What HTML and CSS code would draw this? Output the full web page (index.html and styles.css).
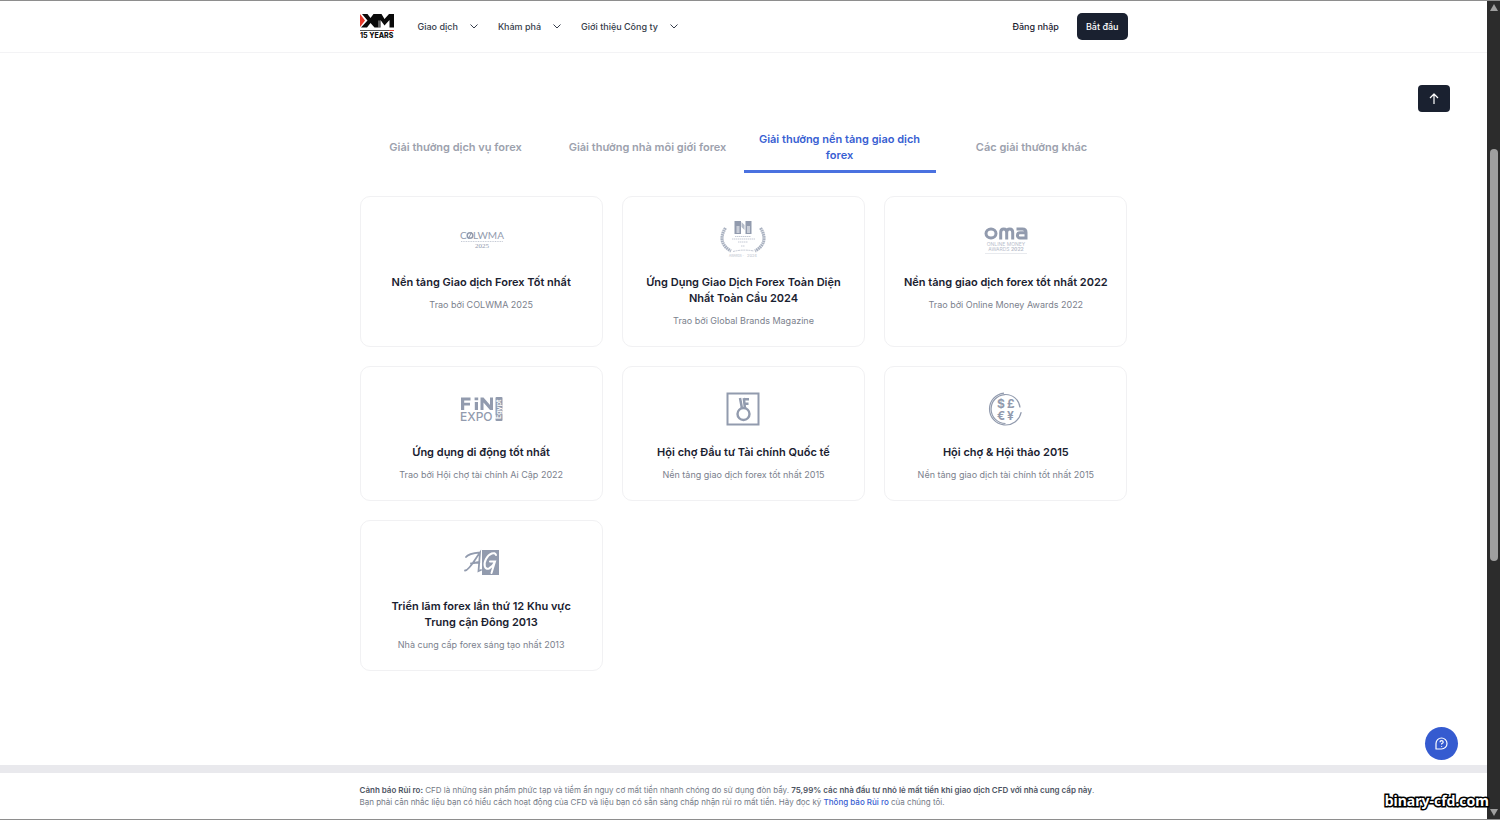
FILE: index.html
```html
<!DOCTYPE html>
<html lang="vi">
<head>
<meta charset="utf-8">
<title>XM - Giải thưởng</title>
<link rel="stylesheet" href="styles.css">
</head>
<body>
<div class="page">
  <header class="header">
    <div class="container header-row">
      <a class="logo" href="#" aria-label="XM 15 Years">
        <svg width="36" height="26" viewBox="1 1 36 26">
          <path d="M1 1L6 7.500L1 14Z" fill="#e8392b"/>
          <path d="M3 1H8.500L11.500 5L14.500 1H22.500L25.500 6L30 1H35V14.500H30.500V7L25.500 12.500L21.500 7V14.500H15.500L11.500 10L8 14.500H2L8.500 7.500Z" fill="#0a0a0a"/>
          <path d="M20 7.500V14.500" fill="none" stroke="#fff" stroke-width=".7"/>
          <path d="M1 17.500H30" stroke="#555" stroke-width="1"/>
          <path d="M30 17.500H35" stroke="#e8392b" stroke-width="1"/>
          <text x="1" y="25" class="logo-years">15 YEARS</text>
        </svg>
      </a>
      <nav class="nav">
        <button class="nav-item">Giao dịch <svg class="chevron" viewBox="0 0 8 5"><path d="M.5.5L4 4L7.500.5"/></svg></button>
        <button class="nav-item">Khám phá <svg class="chevron" viewBox="0 0 8 5"><path d="M.5.5L4 4L7.500.5"/></svg></button>
        <button class="nav-item">Giới thiệu Công ty <svg class="chevron" viewBox="0 0 8 5"><path d="M.5.5L4 4L7.500.5"/></svg></button>
      </nav>
      <a class="login" href="#">Đăng nhập</a>
      <button class="start">Bắt đầu</button>
    </div>
  </header>

  <main class="main">
    <div class="container">
      <div class="tabs" role="tablist">
        <button class="tab" role="tab">Giải thưởng dịch vụ forex</button>
        <button class="tab" role="tab">Giải thưởng nhà môi giới forex</button>
        <button class="tab tab-active" role="tab" aria-selected="true">Giải thưởng nền tảng giao dịch forex</button>
        <button class="tab" role="tab">Các giải thưởng khác</button>
      </div>
      <div class="cards">
        <article class="card">
          <svg class="award" viewBox="0 0 48 48">
            <g class="colwma"><text x="3" y="24" font-size="10">C</text><text x="16" y="24" font-size="10">LWMA</text><text x="25" y="33" font-size="7" text-anchor="middle" class="year">2025</text></g>
            <circle cx="13" cy="20.500" r="2.800" fill="none" stroke="#929bae" stroke-width="1.500"/>
            <path d="M14.500 17L11.500 24" stroke="#929bae"/>
            <path d="M4 26.500H46" stroke="#c5cad5" stroke-dasharray="1 .7"/>
          </svg>
          <h2>Nền tảng Giao dịch Forex Tốt nhất</h2>
          <p>Trao bởi COLWMA 2025</p>
        </article>
        <article class="card">
          <svg class="award" viewBox="0 0 48 48">
            <path d="M15.500 6h6.500v13h-6.500zM26.500 6h6v13h-6z" fill="#929bae"/>
            <path d="M17.500 11h3v7h-3zM28 11h3v7h-3z" fill="#c9ced8"/>
            <path d="M22.500 7L25.500 10V15L22.500 12Z" fill="#b4bbc8"/>
            <path d="M6.500 13C0 23 3 31 12 36M41.500 13C48 23 45 31 36 36" fill="none" stroke="#a9b1c0" stroke-width="3.200" stroke-dasharray="1.700 .5"/>
            <path d="M16 21.500H32M13 24H36M19 27H29M22 31H26" stroke="#c5cad5" stroke-dasharray="1.500 .5"/>
            <path d="M14 36.500Q24 34 35 36" fill="none" stroke="#c5cad5" stroke-dasharray="2 .6"/>
            <text x="10" y="42" class="tiny" font-size="3">AWARDS -</text><text x="28" y="42" class="tiny" font-size="4">2024</text>
          </svg>
          <h2>Ứng Dụng Giao Dịch Forex Toàn Diện Nhất Toàn Cầu 2024</h2>
          <p>Trao bởi Global Brands Magazine</p>
        </article>
        <article class="card">
          <svg class="award" viewBox="0 0 48 48">
            <path d="M4 18.500a5 4.500 0 1 0 10 0a5 4.500 0 1 0-10 0M18.700 24.500V17.500q0-3.500 3-3.500t3 3.500V24.500M24.700 17.500q0-3.500 3-3.500t3 3.500V24.500M34.500 14H40.500q3.500 0 3.500 3.500V23H38a2.600 2.600 0 0 1 0-5.200H44" fill="none" stroke="#929bae" stroke-width="3"/>
            <g class="tiny" text-anchor="middle" font-size="5"><text x="24" y="31">ONLINE MONEY</text><text x="24" y="36">AWARDS <tspan font-weight="700">2022</tspan></text></g>
            <path d="M3 38.500H45" stroke="#d8dbe2" stroke-width=".6"/>
          </svg>
          <h2>Nền tảng giao dịch forex tốt nhất 2022</h2>
          <p>Trao bởi Online Money Awards 2022</p>
        </article>
        <article class="card">
          <svg class="award" viewBox="0 0 48 48">
            <path d="M4 12.500H13.500V15.500H7.200V17.800H13V20.500H7.200V25H4ZM17.800 17H21V25H17.800ZM17.600 12.500H21.200V15.200H17.600ZM23.500 25V12.500H26.500L33 20V12.500H36V25H33L26.500 17.500V25Z" fill="#929bae"/>
            <text x="3" y="36" font-size="12" font-weight="500" class="mark">EXPO</text>
            <rect x="38.500" y="12" width="7" height="24" rx="1" fill="#929bae"/>
            <text transform="translate(44 34) rotate(-90)" font-size="7" font-weight="600" fill="#fff">Egypt</text>
          </svg>
          <h2>Ứng dụng di động tốt nhất</h2>
          <p>Trao bởi Hội chợ tài chính Ai Cập 2022</p>
        </article>
        <article class="card">
          <svg class="award" viewBox="0 0 48 48">
            <rect x="8.500" y="8.500" width="31" height="31" fill="none" stroke="#929bae" stroke-width="2"/>
            <circle cx="24.500" cy="29" r="6" fill="none" stroke="#929bae" stroke-width="2.400"/>
            <path d="M21 13L23 23.500M24.800 13L26 23.500M24.500 14.200H30M25.300 18.800H29.500" fill="none" stroke="#929bae" stroke-width="2.500"/>
          </svg>
          <h2>Hội chợ Đầu tư Tài chính Quốc tế</h2>
          <p>Nền tảng giao dịch forex tốt nhất 2015</p>
        </article>
        <article class="card">
          <svg class="award" viewBox="0 0 48 48">
            <path d="M38 22.500A14.500 14.500 0 1 0 23.500 38.500" fill="none" stroke="#929bae" stroke-width="1.200"/>
            <path d="M22 8.070A16 16 0 1 0 39.200 27.200" fill="none" stroke="#929bae" stroke-width="1.200"/>
            <g class="mark" font-size="12" font-weight="700"><text x="15" y="23">$</text><text x="25" y="23">£</text><text x="15" y="35">€</text><text x="25" y="35">¥</text></g>
          </svg>
          <h2>Hội chợ &amp; Hội thảo 2015</h2>
          <p>Nền tảng giao dịch tài chính tốt nhất 2015</p>
        </article>
        <article class="card">
          <svg class="award" viewBox="-1 0 48 48">
            <rect x="24" y="11" width="17" height="25" fill="#929bae"/>
            <path d="M7 31.500C11 32 17 20 22 13.500L20.500 32L23 31M8 18C10 15 16 14 22 13.500M13 24.500L21.500 23" fill="none" stroke="#929bae" stroke-width="1.800" stroke-linecap="round"/>
            <path d="M38 16C37 12.500 31 14 28 20C25 26 27 31 31 29.500C34 28 36 25 37 22.500H32M37 22.500L33.500 34" fill="none" stroke="#fff" stroke-width="2" stroke-linecap="round"/>
          </svg>
          <h2>Triển lãm forex lần thứ 12 Khu vực Trung cận Đông 2013</h2>
          <p>Nhà cung cấp forex sáng tạo nhất 2013</p>
        </article>
      </div>
    </div>
  </main>

  <footer class="risk">
    <p class="container"><strong>Cảnh báo Rủi ro:</strong> CFD là những sản phẩm phức tạp và tiềm ẩn nguy cơ mất tiền nhanh chóng do sử dụng đòn bẩy. <strong>75,99% các nhà đầu tư nhỏ lẻ mất tiền khi giao dịch CFD với nhà cung cấp này</strong>.<br>Bạn phải cân nhắc liệu bạn có hiểu cách hoạt động của CFD và liệu bạn có sẵn sàng chấp nhận rủi ro mất tiền. Hãy đọc kỹ <a href="#">Thông báo Rủi ro</a> của chúng tôi.</p>
  </footer>

  <button class="to-top" aria-label="Lên đầu trang"><svg width="12" height="12" viewBox="0 0 12 12"><path d="M6 11V1.500M2 5L6 1L10 5"/></svg></button>
  <button class="chat" aria-label="Trợ giúp"><svg width="13" height="13" viewBox="0 0 13 13"><path d="M1 12V6.500A5.500 5.500 0 1 1 6.500 12ZM5 5.200Q5 3.700 6.600 3.700T8.200 5.200Q8.200 6 6.600 6.800V7.600M6.600 9V9.700"/></svg></button>
</div>
<div class="scrollbar" aria-hidden="true">
  <span class="arrow arrow-up"></span>
  <span class="thumb"></span>
  <span class="arrow arrow-down"></span>
</div>
<span class="watermark">binary-cfd.com</span>
</body>
</html>
```
FILE: styles.css
```css
* { box-sizing: border-box; }
body {
  margin: 0;
  min-height: 100vh;
  display: flex;
  position: relative;
  border-top: 1px solid #8e8e8e;
  border-bottom: 1px solid #8e8e8e;
  background: #fff;
  color: #1a2130;
  font-family: Inter, "Liberation Sans", sans-serif;
  font-size: 9px;
  line-height: 16px;
}
button { font: inherit; border: 0; padding: 0; background: none; color: inherit; cursor: pointer; }
a { color: inherit; text-decoration: none; }
h2, p { margin: 0; }
.page { flex: 1; display: flex; flex-direction: column; position: relative; }
.container { width: 100%; max-width: 768px; margin: 0 auto; }

.header { border-bottom: 1px solid #f3f3f5; padding: 12px 0; }
.header-row { display: flex; align-items: center; }
.logo { display: flex; margin-right: 22px; }
.logo-years { font-size: 7px; font-weight: 800; fill: #111; }
.nav { display: flex; gap: 20px; flex: 1; color: #363d4b; }
.nav-item { display: flex; align-items: center; gap: 12px; font-weight: 500; }
.chevron { width: 8px; height: 5px; }
.chevron path { fill: none; stroke: #363d4b; stroke-width: 1; }
.login { font-weight: 500; margin-right: 18px; }
.start { background: #1a2130; color: #fff; font-weight: 500; border-radius: 5px; padding: 6px 9px 5px; }

.main { flex: 1; padding: 68px 0 94px; }
.tabs { display: grid; grid-template-columns: repeat(4, 1fr); margin-bottom: 23px; }
.tab { font-size: 11px; font-weight: 600; color: #9ca1ad; padding: 10px 12px 7px; border-bottom: 3px solid transparent; }
.tab-active { color: #3860d2; border-color: #4a71e0; }
.cards { display: grid; grid-template-columns: repeat(3, 1fr); gap: 19px; }
.card {
  display: flex; flex-direction: column; align-items: center; text-align: center;
  border: 1px solid #f1f1f3; border-radius: 10px; padding: 18px 18px 17px;
}
.award { width: 48px; height: 48px; margin-bottom: 11px; }
.card h2 { font-size: 11px; font-weight: 600; line-height: 16px; margin-bottom: 7px; }
.card p { color: #7b818d; }
.colwma { fill: #929bae; font-family: Lato, sans-serif; }
.year { font-family: "Liberation Serif", serif; }
.mark { fill: #929bae; }
.tiny { fill: #b8becb; }

.risk { border-top: 8px solid #e9e9ed; padding: 11px 0; font-size: 8px; line-height: 12px; color: #747a86; }
.risk strong { color: #4e5563; font-weight: 600; }
.risk a { color: #3860d2; font-weight: 500; }

.to-top { position: absolute; top: 84px; right: 37px; width: 32px; height: 27px; border-radius: 4px; background: #1a2130; display: grid; place-items: center; }
.chat { position: absolute; bottom: 59px; right: 29px; width: 33px; height: 33px; border-radius: 50%; background: #355bd0; display: grid; place-items: center; }
.to-top path, .chat path { fill: none; stroke: #fff; stroke-width: 1.2; stroke-linejoin: round; }

.scrollbar { width: 13px; background: #2c2c2c; display: flex; flex-direction: column; align-items: center; padding: 3px 0; }
.thumb { width: 8px; flex: 1; border-radius: 4px; background: #9f9f9f; margin: 138px 0 248px; }
.arrow { border: 4px solid transparent; }
.arrow-up { border-bottom: 7px solid #9f9f9f; border-top: 0; }
.arrow-down { border-top: 7px solid #9f9f9f; border-bottom: 0; }
.watermark {
  position: absolute; right: 11px; bottom: 8px;
  font: 700 14px/20px "Noto Sans", sans-serif; color: #fff;
  -webkit-text-stroke: 3px #000; paint-order: stroke fill;
}
```
